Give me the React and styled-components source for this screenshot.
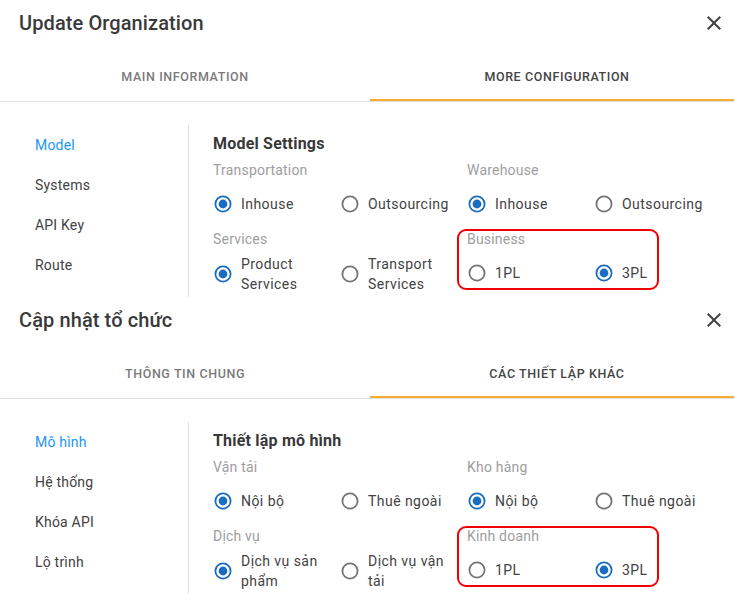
import React from 'react';
import styled, { createGlobalStyle } from 'styled-components';

const GlobalStyle = createGlobalStyle`
    html, body {
        margin: 0;
        padding: 0;
        background: #ffffff;
        overflow: hidden;
    }
    body {
        font-family: Roboto, "Noto Sans", "Liberation Sans", sans-serif;
        color: #424242;
    }
`;

const TEXTS = {
    en: {
        title: 'Update Organization',
        tabs: ['Main information', 'More configuration'],
        nav: ['Model', 'Systems', 'API Key', 'Route'],
        heading: 'Model Settings',
        groups: [
            { label: 'Transportation', options: ['Inhouse', 'Outsourcing'], checked: 0 },
            { label: 'Warehouse', options: ['Inhouse', 'Outsourcing'], checked: 0 },
            { label: 'Services', options: ['Product Services', 'Transport Services'], checked: 0 },
            { label: 'Business', options: ['1PL', '3PL'], checked: 1, marked: true },
        ],
    },
    vi: {
        title: 'Cập nhật tổ chức',
        tabs: ['Thông tin chung', 'Các thiết lập khác'],
        nav: ['Mô hình', 'Hệ thống', 'Khóa API', 'Lộ trình'],
        heading: 'Thiết lập mô hình',
        groups: [
            { label: 'Vận tải', options: ['Nội bộ', 'Thuê ngoài'], checked: 0 },
            { label: 'Kho hàng', options: ['Nội bộ', 'Thuê ngoài'], checked: 0 },
            { label: 'Dịch vụ', options: ['Dịch vụ sản phẩm', 'Dịch vụ vận tải'], checked: 0 },
            { label: 'Kinh doanh', options: ['1PL', '3PL'], checked: 1, marked: true },
        ],
    },
};

function RadioIcon({ checked }) {
    const color = checked ? '#1a6cc0' : '#757575';
    return (
        <RadioSvg viewBox="0 0 20 20">
            <circle cx="10" cy="10" r="7.6" fill="none" stroke={color} strokeWidth="1.8" />
            {checked && <circle cx="10" cy="10" r="4.4" fill={color} />}
        </RadioSvg>
    );
}

function CloseIcon() {
    return (
        <CloseSvg viewBox="0 0 24 24">
            <path
                fill="#424242"
                d="M19 6.41 17.59 5 12 10.59 6.41 5 5 6.41 10.59 12 5 17.59 6.41 19 12 13.41 17.59 19 19 17.59 13.41 12z"
            />
        </CloseSvg>
    );
}

function Dialog({ lang }) {
    const t = TEXTS[lang];
    return (
        <Panel>
            <Header>
                <Title>{t.title}</Title>
                <CloseButton><CloseIcon /></CloseButton>
            </Header>
            <Tabs>
                {t.tabs.map((tab, i) => (
                    <Tab key={tab} active={i === 1}>{tab}</Tab>
                ))}
            </Tabs>
            <Body>
                <Nav>
                    {t.nav.map((item, i) => (
                        <NavItem key={item} active={i === 0}>{item}</NavItem>
                    ))}
                </Nav>
                <Content>
                    <Heading>{t.heading}</Heading>
                    <Groups>
                        {t.groups.map((g) => (
                            <Group key={g.label}>
                                {g.marked && <Marker />}
                                <GroupLabel>{g.label}</GroupLabel>
                                <Options>
                                    {g.options.map((opt, i) => (
                                        <Option key={opt}>
                                            <RadioIcon checked={i === g.checked} />
                                            <OptionLabel>{opt}</OptionLabel>
                                        </Option>
                                    ))}
                                </Options>
                            </Group>
                        ))}
                    </Groups>
                </Content>
            </Body>
        </Panel>
    );
}

export default function App() {
    return (
        <Page>
            <GlobalStyle />
            <Dialog lang="en" />
            <Dialog lang="vi" />
        </Page>
    );
}

//Page
const Page = styled.div`
    width: 734px;
    height: 594px;
    overflow: hidden;
    background: #fff;
`;

//Dialog
const Panel = styled.section`
    width: 744px;
    height: 297px;
    overflow: hidden;
    background: #fff;
`;

const Header = styled.div`
    height: 46px;
    display: flex;
    align-items: center;
    justify-content: space-between;
    padding: 0 18px 0 19px;
    box-sizing: border-box;
`;

const Title = styled.h2`
    margin: 0;
    font-size: 20px;
    font-weight: 500;
    color: #3a3a3a;
    letter-spacing: 0.1px;
`;

const CloseButton = styled.div`
    width: 24px;
    height: 24px;
    display: flex;
`;

const CloseSvg = styled.svg`
    width: 24px;
    height: 24px;
`;

//Tabs
const Tabs = styled.div`
    margin-top: 7px;
    display: grid;
    grid-template-columns: 370px 1fr;
    border-bottom: 1px solid #e0e0e0;
`;

const Tab = styled.div`
    height: 48px;
    display: flex;
    align-items: center;
    justify-content: center;
    box-sizing: border-box;
    text-transform: uppercase;
    font-size: 12.5px;
    font-weight: 500;
    letter-spacing: 0.6px;
    color: ${(p) => (p.active ? '#454545' : '#7a7a7a')};
    border-bottom: 2px solid ${(p) => (p.active ? '#f9ac33' : 'transparent')};
`;

//Body
const Body = styled.div`
    display: flex;
    padding-top: 23px;
`;

const Nav = styled.nav`
    width: 188px;
    flex-shrink: 0;
    border-right: 1px solid #e0e0e0;
    min-height: 200px;
`;

const NavItem = styled.div`
    height: 40px;
    line-height: 40px;
    padding-left: 35px;
    font-size: 14px;
    letter-spacing: 0.2px;
    color: ${(p) => (p.active ? '#2196f3' : '#424242')};
`;

const Content = styled.div`
    padding: 7px 0 0 24px;
`;

const Heading = styled.h3`
    margin: 0;
    font-size: 16px;
    line-height: 24px;
    font-weight: 700;
    letter-spacing: 0.2px;
    color: #383838;
`;

const Groups = styled.div`
    margin-top: 4px;
    display: grid;
    grid-template-columns: 254px 254px;
    row-gap: 6px;
`;

const Group = styled.div`
    position: relative;
`;

const Marker = styled.div`
    position: absolute;
    left: -10px;
    top: 0;
    width: 202px;
    height: 61px;
    box-sizing: border-box;
    border: 2.5px solid #f20000;
    border-radius: 9px;
    pointer-events: none;
`;

const GroupLabel = styled.div`
    font-size: 14px;
    line-height: 20px;
    color: #9e9e9e;
    letter-spacing: 0.2px;
`;

const Options = styled.div`
    margin-top: 5px;
    display: grid;
    grid-template-columns: 127px 127px;
`;

const Option = styled.label`
    display: flex;
    align-items: center;
    gap: 8px;
    min-height: 38px;
`;

const RadioSvg = styled.svg`
    width: 20px;
    height: 20px;
    flex-shrink: 0;
`;

const OptionLabel = styled.span`
    max-width: 92px;
    font-size: 14px;
    line-height: 20px;
    letter-spacing: 0.45px;
    color: #424242;
`;
